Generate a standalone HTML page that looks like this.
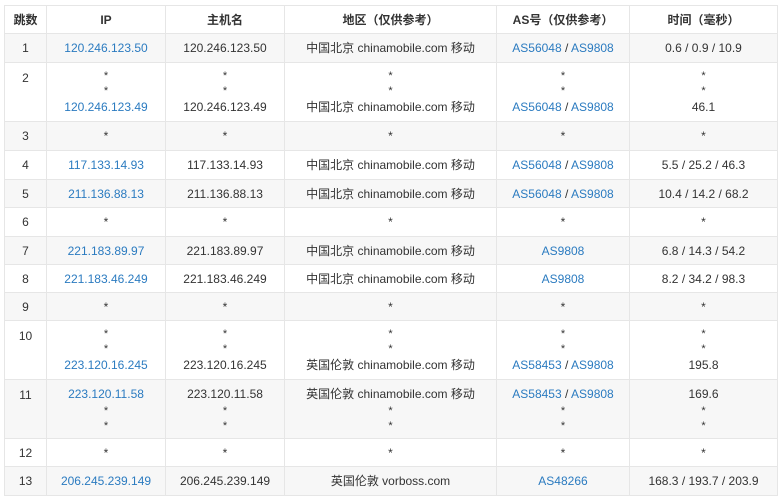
<!DOCTYPE html>
<html><head><meta charset="utf-8"><style>
body{margin:0;background:#fff;font-family:"Liberation Sans","Noto Sans CJK SC",sans-serif;font-size:12px;color:#333}
table{position:absolute;left:4px;top:5px;border-collapse:collapse;width:773px;table-layout:fixed}
td,th{border:1px solid #e6e6e6;text-align:center;padding:5px 0 5px;line-height:18px;height:18px;vertical-align:middle}
tr.r td{padding-bottom:4px;padding-top:5px}
th{font-weight:bold;padding:5px 0 4px}
tr.s td{background:#f7f7f7}
a{color:#2b7bc0;text-decoration:none}
.st{height:15px;line-height:17px;font-size:11px;overflow:hidden}
.t{height:18px}
td.n{vertical-align:top;padding-top:6px;padding-bottom:4px}
</style></head><body>
<table>
<colgroup><col style="width:42px"><col style="width:119px"><col style="width:119px"><col style="width:212px"><col style="width:133px"><col style="width:148px"></colgroup>
<tr><th>跳数</th><th>IP</th><th>主机名</th><th>地区（仅供参考）</th><th>AS号（仅供参考）</th><th>时间（毫秒）</th></tr>
<tr class="s"><td>1</td><td><a>120.246.123.50</a></td><td>120.246.123.50</td><td>中国北京 chinamobile.com 移动</td><td><a>AS56048</a> / <a>AS9808</a></td><td>0.6 / 0.9 / 10.9</td></tr>
<tr><td class="n">2</td><td><div class="st">*</div><div class="st">*</div><div class="t"><a>120.246.123.49</a></div></td><td><div class="st">*</div><div class="st">*</div><div class="t">120.246.123.49</div></td><td><div class="st">*</div><div class="st">*</div><div class="t">中国北京 chinamobile.com 移动</div></td><td><div class="st">*</div><div class="st">*</div><div class="t"><a>AS56048</a> / <a>AS9808</a></div></td><td><div class="st">*</div><div class="st">*</div><div class="t">46.1</div></td></tr>
<tr class="s"><td>3</td><td>*</td><td>*</td><td>*</td><td>*</td><td>*</td></tr>
<tr><td>4</td><td><a>117.133.14.93</a></td><td>117.133.14.93</td><td>中国北京 chinamobile.com 移动</td><td><a>AS56048</a> / <a>AS9808</a></td><td>5.5 / 25.2 / 46.3</td></tr>
<tr class="s r"><td>5</td><td><a>211.136.88.13</a></td><td>211.136.88.13</td><td>中国北京 chinamobile.com 移动</td><td><a>AS56048</a> / <a>AS9808</a></td><td>10.4 / 14.2 / 68.2</td></tr>
<tr><td>6</td><td>*</td><td>*</td><td>*</td><td>*</td><td>*</td></tr>
<tr class="s r"><td>7</td><td><a>221.183.89.97</a></td><td>221.183.89.97</td><td>中国北京 chinamobile.com 移动</td><td><a>AS9808</a></td><td>6.8 / 14.3 / 54.2</td></tr>
<tr class="r"><td>8</td><td><a>221.183.46.249</a></td><td>221.183.46.249</td><td>中国北京 chinamobile.com 移动</td><td><a>AS9808</a></td><td>8.2 / 34.2 / 98.3</td></tr>
<tr class="s r"><td>9</td><td>*</td><td>*</td><td>*</td><td>*</td><td>*</td></tr>
<tr><td class="n">10</td><td><div class="st">*</div><div class="st">*</div><div class="t"><a>223.120.16.245</a></div></td><td><div class="st">*</div><div class="st">*</div><div class="t">223.120.16.245</div></td><td><div class="st">*</div><div class="st">*</div><div class="t">英国伦敦 chinamobile.com 移动</div></td><td><div class="st">*</div><div class="st">*</div><div class="t"><a>AS58453</a> / <a>AS9808</a></div></td><td><div class="st">*</div><div class="st">*</div><div class="t">195.8</div></td></tr>
<tr class="s"><td class="n">11</td><td><div class="t"><a>223.120.11.58</a></div><div class="st">*</div><div class="st">*</div></td><td><div class="t">223.120.11.58</div><div class="st">*</div><div class="st">*</div></td><td><div class="t">英国伦敦 chinamobile.com 移动</div><div class="st">*</div><div class="st">*</div></td><td><div class="t"><a>AS58453</a> / <a>AS9808</a></div><div class="st">*</div><div class="st">*</div></td><td><div class="t">169.6</div><div class="st">*</div><div class="st">*</div></td></tr>
<tr class="r"><td>12</td><td>*</td><td>*</td><td>*</td><td>*</td><td>*</td></tr>
<tr class="s"><td>13</td><td><a>206.245.239.149</a></td><td>206.245.239.149</td><td>英国伦敦 vorboss.com</td><td><a>AS48266</a></td><td>168.3 / 193.7 / 203.9</td></tr>
</table>
</body></html>
